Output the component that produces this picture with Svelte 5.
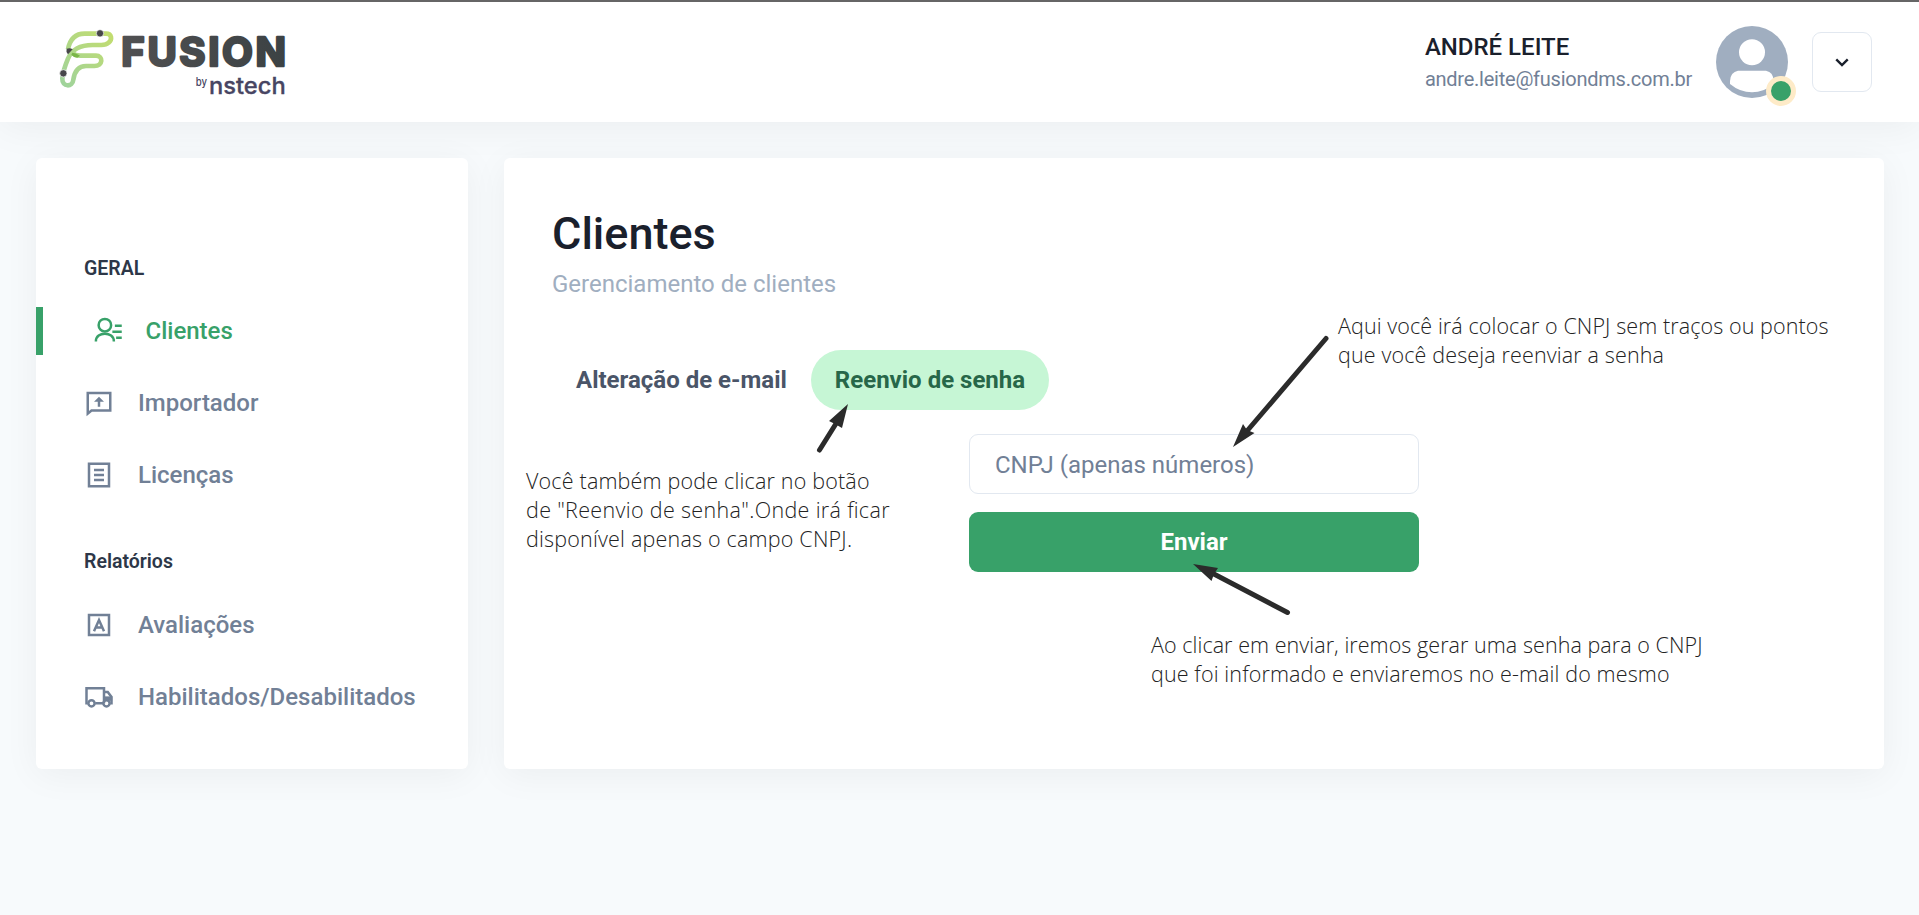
<script>
  const groups = [
    {
      title: 'GERAL',
      items: [
        { label: 'Clientes', icon: 'user', active: true },
        { label: 'Importador', icon: 'upload' },
        { label: 'Licenças', icon: 'list' }
      ]
    },
    {
      title: 'Relatórios',
      items: [
        { label: 'Avaliações', icon: 'letter' },
        { label: 'Habilitados/Desabilitados', icon: 'truck' }
      ]
    }
  ];
</script>

<header>
  <svg class="logo" viewBox="54 84 690 210" aria-label="Fusion by nstech">
    <defs>
      <linearGradient id="leaf" gradientUnits="userSpaceOnUse" x1="70" y1="260" x2="220" y2="100">
        <stop offset="0" stop-color="#9fd39c" /><stop offset="1" stop-color="#c3dd6e" />
      </linearGradient>
      <linearGradient id="ink" gradientUnits="userSpaceOnUse" x1="247" y1="0" x2="735" y2="0">
        <stop offset="0" stop-color="#505052" /><stop offset="1" stop-color="#3c4244" />
      </linearGradient>
    </defs>
    <g fill="none" stroke="url(#leaf)" stroke-width="14">
      <path d="M84 148C90 116 106 101 134 101H198C216 101 217 119 206 128C200 134 192 135 184 135H158C118 135 94 152 84 176C74 200 68 220 67 236C66 262 98 262 100 239C104 212 116 198 138 198H163C190 198 190 167 168 167H120C108 167 101 163 97 158" />
    </g>
    <path d="M97 158Q108 158 120 167L112 173Q100 172 94 164Z" fill="#7ab648" />
    <g fill="#47464a" stroke="#fff" stroke-width="2">
      <circle cx="180" cy="100" r="11" /><circle cx="70" cy="220" r="11" />
    </g>
    <path d="M80 146Q90 142 98 148L84 163Q77 155 80 146Z" fill="#47464a" />
    <text class="word" x="244" y="199" textLength="494">FUSION</text>
    <text class="by" x="467" y="259" textLength="34" lengthAdjust="spacingAndGlyphs">by</text>
    <text class="tech" x="507" y="281" textLength="230" lengthAdjust="spacingAndGlyphs">nstech</text>
  </svg>
  <div class="account">
    <div class="who">
      <strong>ANDRÉ LEITE</strong>
      <span>andre.leite@fusiondms.com.br</span>
    </div>
    <div class="avatar">
      <svg viewBox="0 0 72 72">
        <circle cx="36" cy="36" r="36" fill="#a0aec0" />
        <circle cx="36" cy="26.3" r="13" fill="#fff" />
        <path d="M22 44.7H50Q57.500 46 57.500 55V58Q48 66.300 36 66.300T14 58V55Q14.500 46 22 44.700Z" fill="#fff" />
      </svg>
      <i class="status"></i>
    </div>
    <button class="more" aria-label="Menu">
      <svg viewBox="0 0 24 24"><path d="M6.700 9.500 12 14.800 17.300 9.500" fill="none" stroke="#1a202c" stroke-width="2.200" /></svg>
    </button>
  </div>
</header>

<div class="page">
  <nav>
    {#each groups as group}
      <section>
        <h2>{group.title}</h2>
        {#each group.items as item}
          <a class:active={item.active}>
            <svg class="icon" viewBox="0 0 24 24">
              {#if item.icon === 'user'}
                <g fill="none" stroke="currentColor" stroke-width="2" transform="translate(-.3 .5)">
                  <circle cx="9" cy="6.800" r="5" /><path d="M1.800 19.800C1.800 11.600 16.200 11.600 16.200 19.800" />
                  <path d="M17 7.300H22.500M15 12H22.500M18 16.800H22.500" />
                </g>
              {:else if item.icon === 'upload'}
                <g fill="none" stroke="currentColor" stroke-width="2">
                  <path d="M3 20.500V4H21V18H6Z" /><path d="M12 15V9" />
                </g>
                <path d="M12 7 16 11H8Z" fill="currentColor" />
              {:else if item.icon === 'list'}
                <path d="M4 3H20V21H4ZM8 8H16M8 12H16M8 16H16" fill="none" stroke="currentColor" stroke-width="2" />
              {:else if item.icon === 'letter'}
                <path d="M4 4H20V20H4Z" fill="none" stroke="currentColor" stroke-width="2" />
                <path d="M8 17 12 8 16 17M9.500 14H14.500" fill="none" stroke="currentColor" stroke-width="2" />
              {:else}
                <g fill="none" stroke="currentColor" stroke-width="2">
                  <path d="M3 17H2V5H16V17M9 17H16M16 8H19L22 12V17H21" />
                  <circle cx="6" cy="17" r="2.500" /><circle cx="18" cy="17" r="2.500" />
                </g>
                <path d="M16 11.500H22.500V15H16Z" fill="currentColor" />
              {/if}
            </svg>
            <span>{item.label}</span>
          </a>
        {/each}
      </section>
    {/each}
  </nav>

  <main>
    <h1>Clientes</h1>
    <p class="sub">Gerenciamento de clientes</p>
    <div class="tabs">
      <button>Alteração de e-mail</button>
      <button class="selected">Reenvio de senha</button>
    </div>
    <form onsubmit={(e) => e.preventDefault()}>
      <input placeholder="CNPJ (apenas números)" />
      <button class="send">Enviar</button>
    </form>
  </main>
</div>

<svg class="notes" viewBox="0 0 1919 915">
  <g stroke="#2b2b2b" stroke-width="5" stroke-linecap="round">
    <path d="M819.500 450 837 422" /><path d="M1326 338.500 1247 431" /><path d="M1287.500 612.500 1212 573" />
  </g>
  <g fill="#2b2b2b">
    <path d="M848 404 829 421 835 424 842 428Z" />
    <path d="M1233 447 1243 424 1247 430 1254.500 433Z" />
    <path d="M1193 564 1218 568 1214 574 1211.500 581Z" />
  </g>
  <g class="note">
    <text x="1338" y="333.500" textLength="490.500">Aqui você irá colocar o CNPJ sem traços ou pontos</text>
    <text x="1338" y="362.500" textLength="326">que você deseja reenviar a senha</text>
    <text x="526" y="488.500" textLength="343.500">Você também pode clicar no botão</text>
    <text x="526" y="517.500" textLength="363.500">de "Reenvio de senha".Onde irá ﬁcar</text>
    <text x="526" y="546.500" textLength="326">disponível apenas o campo CNPJ.</text>
    <text x="1151" y="652.500" textLength="551.500">Ao clicar em enviar, iremos gerar uma senha para o CNPJ</text>
    <text x="1151" y="681.500" textLength="518.500">que foi informado e enviaremos no e-mail do mesmo</text>
  </g>
</svg>

<style>
  :global(html) { background: #f7fafc; }
  :global(body) { font-family: Roboto, sans-serif; font-size: 24px; color: #1a202c; }
  :global(*) { box-sizing: border-box; }
  button, input { font: inherit; }
  header {
    height: 122px; padding: 2px 47px 0 58px; border-top: 2px solid #666566; background: #fff;
    display: flex; justify-content: space-between; align-items: flex-start;
    box-shadow: 0 6px 36px rgba(0, 0, 0, .05);
  }
  .logo { width: 230px; height: 70px; margin-top: 24px; overflow: visible; }
  .word { font: 700 120px Inter, sans-serif; fill: url(#ink); stroke: url(#ink); stroke-width: 8px; stroke-linejoin: round; }
  .by { font: 500 35px Inter, sans-serif; fill: #474562; }
  .tech { font: 500 69px Inter, sans-serif; fill: #474562; stroke: #474562; stroke-width: 1px; }
  .account { display: flex; align-items: center; height: 116px; }
  .who { display: flex; flex-direction: column; margin-right: 24px; }
  .who strong { font-weight: 500; line-height: 36px; }
  .who span { font-size: 20px; line-height: 30px; letter-spacing: -.24px; margin-top: -1px; margin-bottom: 1px; color: #718096; }
  .avatar { position: relative; width: 72px; height: 72px; margin-right: 24px; }
  .avatar svg { width: 72px; height: 72px; display: block; }
  .status { position: absolute; right: -7.500px; bottom: -7.500px; width: 30px; height: 30px; border: 5px solid #feebc8; border-radius: 50%; background: #38a169; }
  .more { width: 60px; height: 60px; padding: 0; border: 1px solid #e2e8f0; border-radius: 9px; background: #fff; display: grid; place-items: center; }
  .more svg { width: 26px; height: 26px; }
  .page { display: flex; align-items: flex-start; gap: 36px; min-height: 793px; padding: 36px 35px 0 36px; }
  nav, main { height: 611px; border-radius: 6px; background: #fff; box-shadow: 0 6px 36px rgba(0, 0, 0, .05); }
  nav { width: 432px; padding-top: 87px; }
  main { flex: 1; padding: 48px; }
  section { height: 293px; }
  h2 { margin: 0 0 14px 48px; font-size: 19.5px; line-height: 48px; font-weight: 600; color: #2d3748; }
  section + section h2 { margin-bottom: 15px; }
  a { display: flex; align-items: center; height: 48px; margin-bottom: 24px; padding-left: 48px; font-weight: 500; color: #718096; }
  a span { margin-left: 24px; }
  a.active { border-left: 7px solid #38a169; color: #38a169; padding-left: 51px; }
  a.active span { margin-left: 21.5px; }
  .icon { width: 30px; height: 30px; flex: none; }
  h1 { margin: 0; font-size: 45px; line-height: 56px; font-weight: 500; }
  .sub { margin: 4px 0 0; line-height: 36px; color: #a0aec0; }
  .tabs { display: flex; margin-top: 48px; }
  .tabs button { height: 60px; padding: 0 24px; border: 0; border-radius: 30px; background: none; font-weight: 700; color: #4a5568; }
  .tabs .selected { background: #c6f6d5; color: #276749; }
  form { width: 450px; margin: 24px auto 0; display: grid; gap: 18px; }
  input { width: 100%; height: 60px; padding: 2px 24px 0 25px; border: 1px solid #e2e8f0; border-radius: 9px; outline: 0; background: #fff; }
  input::placeholder { color: #718096; opacity: 1; }
  .send { height: 60px; border: 0; border-radius: 9px; background: #38a169; color: #fff; font-weight: 700; }
  .notes { position: absolute; left: 0; top: 0; width: 1919px; height: 915px; pointer-events: none; }
  .note { font: 300 21.5px "Open Sans", sans-serif; fill: #222; }
</style>
